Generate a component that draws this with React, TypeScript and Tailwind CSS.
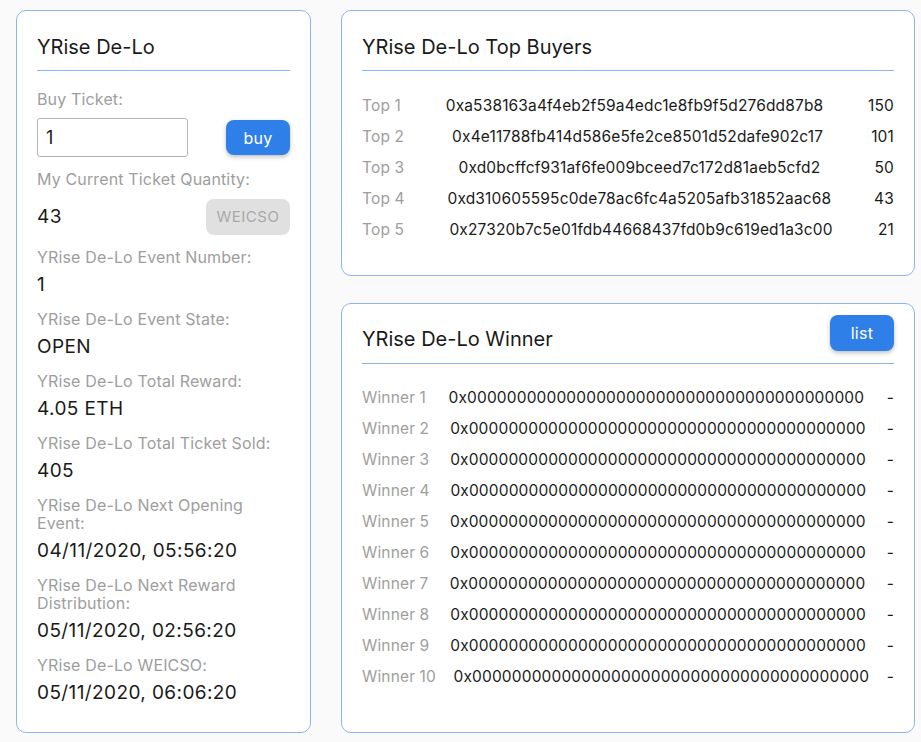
import React from 'react'

const buyers = [
  { rank: 'Top 1', address: '0xa538163a4f4eb2f59a4edc1e8fb9f5d276dd87b8', count: '150' },
  { rank: 'Top 2', address: '0x4e11788fb414d586e5fe2ce8501d52dafe902c17', count: '101' },
  { rank: 'Top 3', address: '0xd0bcffcf931af6fe009bceed7c172d81aeb5cfd2', count: '50' },
  { rank: 'Top 4', address: '0xd310605595c0de78ac6fc4a5205afb31852aac68', count: '43' },
  { rank: 'Top 5', address: '0x27320b7c5e01fdb44668437fd0b9c619ed1a3c00', count: '21' },
]

const zeroAddress = '0x0000000000000000000000000000000000000000'
const winners = Array.from({ length: 10 }, (_, i) => `Winner ${i + 1}`)

const infoItems = [
  { label: 'YRise De-Lo Event Number:', value: '1' },
  { label: 'YRise De-Lo Event State:', value: 'OPEN' },
  { label: 'YRise De-Lo Total Reward:', value: '4.05 ETH' },
  { label: 'YRise De-Lo Total Ticket Sold:', value: '405' },
  { label: 'YRise De-Lo Next Opening Event:', value: '04/11/2020, 05:56:20' },
  { label: 'YRise De-Lo Next Reward Distribution:', value: '05/11/2020, 02:56:20' },
  { label: 'YRise De-Lo WEICSO:', value: '05/11/2020, 06:06:20' },
]

const Label = ({ children }: { children: React.ReactNode }) => (
  <div className="text-[16px] leading-[18px] tracking-[0.15px] text-[#9e9e9e]">{children}</div>
)

const App = () => {
  return (
    <div
      className="min-h-screen bg-[#fafafa] pt-[10px] pl-4 flex gap-[30px] text-[#1a1a1a]"
      style={{ fontFamily: 'Inter, "Noto Sans", sans-serif' }}
    >
      {/* left panel */}
      <div className="w-[295px] h-[723px] shrink-0 bg-white border border-[#8cb4f5] rounded-[10px] px-5 pt-[22px]">
        <div className="text-[20px] leading-[28px]">YRise De-Lo</div>
        <div className="mt-[9px] h-px bg-[#8cb4f5]" />

        <div className="mt-[19px]">
          <Label>Buy Ticket:</Label>
        </div>
        <div className="mt-[10px] flex items-center justify-between">
          <div className="w-[151px] h-[39px] border border-[#b5b5b5] rounded-[3px] px-2 flex items-center text-[18px]">
            1
          </div>
          <button className="w-[64px] h-[35px] rounded-lg bg-[#2f7fe9] text-white text-[16px] tracking-[0.3px] shadow-[0_2px_4px_rgba(0,0,0,0.25)]">
            buy
          </button>
        </div>

        <div className="mt-[13px]">
          <Label>My Current Ticket Quantity:</Label>
        </div>
        <div className="mt-[11px] flex items-center justify-between h-[36px]">
          <div className="text-[19px] leading-[24px] tracking-[0.4px]">43</div>
          <button className="w-[84px] h-[36px] rounded-lg bg-[#e0e0e0] text-[#a8a8a8] text-[15px] tracking-[0.5px]">
            WEICSO
          </button>
        </div>

        {infoItems.map((item, i) => (
          <div key={i} className="mt-[13px]">
            <Label>{item.label}</Label>
            <div className="mt-[7px] text-[19px] leading-[24px] tracking-[0.4px]">{item.value}</div>
          </div>
        ))}
      </div>

      {/* right column */}
      <div className="w-[574px] h-[723px] flex flex-col gap-[27px]">
        <div className="h-[266px] bg-white border border-[#8cb4f5] rounded-[10px] px-5 pt-[22px]">
          <div className="text-[20px] leading-[28px]">YRise De-Lo Top Buyers</div>
          <div className="mt-[9px] h-px bg-[#8cb4f5]" />
          <div className="mt-[19px]">
            {buyers.map((b) => (
              <div key={b.rank} className="flex justify-between items-center h-[31px] text-[15.5px] tracking-[0.15px]">
                <span className="text-[#9e9e9e]">{b.rank}</span>
                <span>{b.address}</span>
                <span>{b.count}</span>
              </div>
            ))}
          </div>
        </div>

        <div className="flex-1 bg-white border border-[#8cb4f5] rounded-[10px] px-5 pt-[11px]">
          <div className="flex items-center justify-between h-[36px]">
            <div className="text-[20px] leading-[28px] mt-[12px]">YRise De-Lo Winner</div>
            <button className="w-[64px] h-[36px] rounded-lg bg-[#2f7fe9] text-white text-[16px] tracking-[0.3px] shadow-[0_2px_4px_rgba(0,0,0,0.25)]">
              list
            </button>
          </div>
          <div className="mt-[12px] h-px bg-[#8cb4f5]" />
          <div className="mt-[18px]">
            {winners.map((w) => (
              <div key={w} className="flex justify-between items-center h-[31px] text-[15.5px] tracking-[0.15px]">
                <span className="text-[#9e9e9e]">{w}</span>
                <span>{zeroAddress}</span>
                <span>-</span>
              </div>
            ))}
          </div>
        </div>
      </div>
    </div>
  )
}

export default App
